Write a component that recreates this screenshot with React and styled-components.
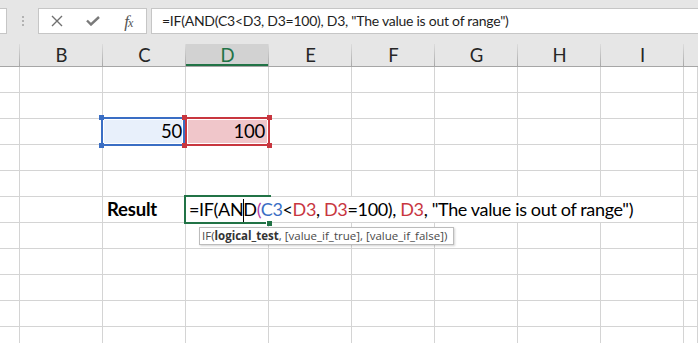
import React from "react";
import styled, { createGlobalStyle } from "styled-components";

const CELL_FONT = `"Lato", "Liberation Sans", sans-serif`;
const UI_FONT = `"Open Sans", "Noto Sans", sans-serif`;

const Global = createGlobalStyle`
  html, body { margin: 0; padding: 0; background: #ffffff; overflow: hidden; }
  * { box-sizing: border-box; }
`;

const Shell = styled.div`
  width: 698px;
  height: 343px;
  overflow: hidden;
  display: flex;
  flex-direction: column;
  background: #ffffff;
`;

const FormulaBar = styled.div`
  height: 44px;
  padding: 8px 0 10px 0;
  display: flex;
  align-items: stretch;
  background: #e6e6e6;
`;

const NameBox = styled.div`
  width: 8px;
  margin-left: -1px;
  background: #fff;
  border: 1px solid #c6c6c6;
`;

const Grip = styled.div`
  width: 31px;
  display: flex;
  flex-direction: column;
  align-items: center;
  justify-content: center;
  gap: 2px;
`;

const GripDot = styled.span`
  width: 2px;
  height: 2px;
  background: #b2b2b2;
`;

const FnButtons = styled.div`
  width: 109px;
  background: #fff;
  border: 1px solid #c6c6c6;
  display: flex;
  align-items: center;
  color: #6f6f6f;
`;

const FnSlot = styled.div`
  width: 36px;
  height: 100%;
  display: flex;
  align-items: center;
  justify-content: center;
`;

const FxLabel = styled.span`
  font-family: "Liberation Serif", "DejaVu Serif", serif;
  font-style: italic;
  font-size: 17px;
  line-height: 1;
  color: #555;
  letter-spacing: -1px;
  & > small {
    font-size: 12px;
  }
`;

const FormulaInput = styled.div`
  flex: 1;
  margin-left: 4px;
  background: #fff;
  border: 1px solid #c6c6c6;
  border-right: none;
  padding-left: 10px;
  font-family: ${CELL_FONT};
  font-size: 14px;
  letter-spacing: -0.25px;
  line-height: 24px;
  color: #1e1e1e;
  white-space: nowrap;
`;

const COLS = `20px repeat(8, 83px) 1fr`;

const HeaderRow = styled.div`
  display: grid;
  grid-template-columns: ${COLS};
  height: 25px;
  background: #e6e6e6;
  border-bottom: 1px solid #a6a6a6;
`;

const HeaderCell = styled.div`
  position: relative;
  display: flex;
  align-items: center;
  justify-content: center;
  font-family: ${CELL_FONT};
  font-size: 18.5px;
  color: ${(p) => (p.$active ? "#217346" : "#262626")};
  background: ${(p) => (p.$active ? "#d2d2d2" : "transparent")};
  box-shadow: ${(p) => (p.$active ? "inset 0 -2px 0 #217346" : "none")};
  &::after {
    content: "";
    position: absolute;
    right: 0;
    top: 0;
    bottom: 0;
    width: 1px;
    background: ${(p) => (p.$last ? "transparent" : "linear-gradient(#dcdcdc, #a9a9a9)")};
  }
`;

const Sheet = styled.div`
  display: flex;
  flex-direction: column;
`;

const Row = styled.div`
  display: grid;
  grid-template-columns: ${COLS};
  height: 26px;
`;

const Cell = styled.div`
  position: relative;
  border-right: 1px solid #d4d4d4;
  border-bottom: 1px solid #d4d4d4;
  padding: 0 4px 0 4px;
  font-family: ${CELL_FONT};
  font-size: 18.5px;
  letter-spacing: -0.2px;
  line-height: 24px;
  color: #000;
  white-space: nowrap;
  text-align: ${(p) => (p.$align === "right" ? "right" : "left")};
  font-weight: ${(p) => (p.$bold ? 700 : 400)};
  background: ${(p) => p.$fill || "transparent"};
  ${(p) => (p.$align === "right" ? "padding-right: 3px;" : "")}
`;

const CellValue = styled.span`
  position: relative;
  z-index: 2;
`;

const RangeBox = styled.div`
  position: absolute;
  top: -2px;
  bottom: -2px;
  left: ${(p) => p.$l}px;
  right: ${(p) => p.$r}px;
  border: 2px solid ${(p) => p.$color};
  box-shadow: inset 0 0 0 1px #ffffff;
  z-index: 1;
  pointer-events: none;
`;

const Handle = styled.span`
  position: absolute;
  width: 5px;
  height: 5px;
  background: ${(p) => p.$color};
  ${(p) => (p.$top ? "top: -4px;" : "bottom: -4px;")}
  ${(p) => (p.$left ? "left: -4px;" : "right: -4px;")}
  z-index: 3;
`;

const ActiveBox = styled.div`
  position: absolute;
  top: -2px;
  bottom: -2px;
  left: -2px;
  right: -3px;
  border: 2px solid #217346;
  z-index: 3;
`;

const FillHandle = styled.span`
  position: absolute;
  right: -4px;
  bottom: -4px;
  width: 6px;
  height: 6px;
  background: #217346;
  border: 1px solid #ffffff;
  border-right: none;
  border-bottom: none;
  z-index: 6;
`;

const EditorText = styled.div`
  position: absolute;
  left: 0;
  top: 0;
  height: 25px;
  padding: 0 6px 0 3px;
  background: #ffffff;
  font-family: ${CELL_FONT};
  font-size: 18px;
  letter-spacing: -0.35px;
  line-height: 24px;
  color: #000;
  white-space: nowrap;
  z-index: 5;
`;

const Tok = styled.span`
  color: ${(p) => p.$c || "#000"};
`;

const Caret = styled.span`
  display: inline-block;
  width: 0;
  height: 23px;
  border-left: 1px solid #000;
  margin-right: -1px;
  vertical-align: -6px;
`;

const Tooltip = styled.div`
  position: absolute;
  left: 13px;
  top: 30px;
  width: 255px;
  height: 18px;
  background: #fff;
  border: 1px solid #bcbcbc;
  box-shadow: 1px 1px 2px rgba(0, 0, 0, 0.18);
  padding-left: 2px;
  font-family: ${UI_FONT};
  font-size: 11.5px;
  letter-spacing: 0;
  line-height: 16px;
  color: #4a4a4a;
  white-space: nowrap;
  z-index: 7;
  & > b {
    font-weight: 700;
    color: #333;
  }
`;

const BLUE = "#3a6ec4";
const RED = "#c8363f";
const PURPLE = "#b43aa6";

const CloseIcon = () => (
  <svg width="12" height="12" viewBox="0 0 12 12">
    <path d="M1 1 L11 11 M11 1 L1 11" stroke="#707070" strokeWidth="1.4" fill="none" />
  </svg>
);

const CheckIcon = () => (
  <svg width="14" height="10" viewBox="0 0 14 10">
    <path d="M1 4.5 L5 8.5 L13 1" stroke="#7a7a7a" strokeWidth="2.4" fill="none" strokeLinejoin="miter" />
  </svg>
);

const columns = ["", "B", "C", "D", "E", "F", "G", "H", "I", ""];

export default function App() {
  const rows = Array.from({ length: 11 }, (_, i) => i);
  return (
    <Shell>
      <Global />
      <FormulaBar>
        <NameBox />
        <Grip>
          <GripDot />
          <GripDot />
          <GripDot />
        </Grip>
        <FnButtons>
          <FnSlot>
            <CloseIcon />
          </FnSlot>
          <FnSlot>
            <CheckIcon />
          </FnSlot>
          <FnSlot>
            <FxLabel>
              f<small>x</small>
            </FxLabel>
          </FnSlot>
        </FnButtons>
        <FormulaInput>=IF(AND(C3&lt;D3, D3=100), D3, "The value is out of range")</FormulaInput>
      </FormulaBar>
      <HeaderRow>
        {columns.map((c, i) => (
          <HeaderCell key={i} $active={c === "D"} $last={i === columns.length - 1}>
            {c}
          </HeaderCell>
        ))}
      </HeaderRow>
      <Sheet>
        {rows.map((r) => (
          <Row key={r}>
            {columns.map((c, i) => {
              if (r === 2 && c === "C") {
                return (
                  <Cell key={i} $align="right" $fill="#e8f0fb">
                    <RangeBox $color={BLUE} $l={-2} $r={0} />
                    <Handle $color={BLUE} $top $left />
                    <Handle $color={BLUE} $left />
                    <CellValue>50</CellValue>
                  </Cell>
                );
              }
              if (r === 2 && c === "D") {
                return (
                  <Cell key={i} $align="right" $fill="#f0c6ca">
                    <RangeBox $color={RED} $l={-1} $r={-2} />
                    <Handle $color={RED} $top $left />
                    <Handle $color={RED} $left />
                    <Handle $color={RED} $top />
                    <Handle $color={RED} />
                    <CellValue>100</CellValue>
                  </Cell>
                );
              }
              if (r === 5 && c === "C") {
                return (
                  <Cell key={i} $bold>
                    Result
                  </Cell>
                );
              }
              if (r === 5 && c === "D") {
                return (
                  <Cell key={i}>
                    <ActiveBox />
                    <FillHandle />
                    <EditorText>
                      =IF(AN
                      <Caret />
                      D<Tok $c={PURPLE}>(</Tok>
                      <Tok $c={BLUE}>C3</Tok>&lt;<Tok $c={RED}>D3</Tok>, <Tok $c={RED}>D3</Tok>=100),{" "}
                      <Tok $c={RED}>D3</Tok>, "The value is out of range")
                    </EditorText>
                    <Tooltip>
                      IF(<b>logical_test</b>, [value_if_true], [value_if_false])
                    </Tooltip>
                  </Cell>
                );
              }
              return <Cell key={i} />;
            })}
          </Row>
        ))}
      </Sheet>
    </Shell>
  );
}
